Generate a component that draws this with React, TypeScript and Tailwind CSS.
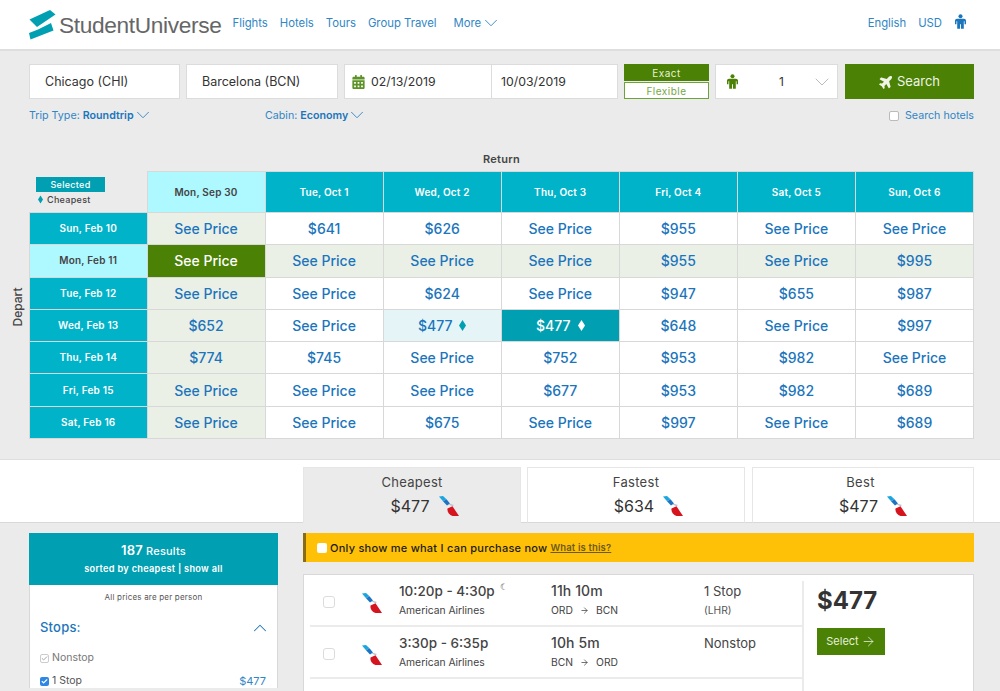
import { ChevronDown, ChevronUp, ArrowRight, Check } from 'lucide-react';
import { FaPlane, FaCalendarAlt } from 'react-icons/fa';

const returnDates = ['Mon, Sep 30', 'Tue, Oct 1', 'Wed, Oct 2', 'Thu, Oct 3', 'Fri, Oct 4', 'Sat, Oct 5', 'Sun, Oct 6'];

const S = 'See Price';
const rows = [
  { depart: 'Sun, Feb 10', prices: [S, '$641', '$626', S, '$955', S, S] },
  { depart: 'Mon, Feb 11', prices: [S, S, S, S, '$955', S, '$995'] },
  { depart: 'Tue, Feb 12', prices: [S, S, '$624', S, '$947', '$655', '$987'] },
  { depart: 'Wed, Feb 13', prices: ['$652', S, '$477', '$477', '$648', S, '$997'] },
  { depart: 'Thu, Feb 14', prices: ['$774', '$745', S, '$752', '$953', '$982', S] },
  { depart: 'Fri, Feb 15', prices: [S, S, S, '$677', '$953', '$982', '$689'] },
  { depart: 'Sat, Feb 16', prices: [S, S, '$675', S, '$997', S, '$689'] },
];

function Diamond({ className }: { className: string }) {
  return (
    <svg viewBox="0 0 7 11" className={className}>
      <polygon points="3.5,0 7,5.5 3.5,11 0,5.5" fill="currentColor" />
    </svg>
  );
}

function Person({ className }: { className: string }) {
  return (
    <svg viewBox="0 0 12 16" className={className}>
      <circle cx="6" cy="2.2" r="2.2" fill="currentColor" />
      <path d="M2.2 5h7.6c1.2 0 2.2 1 2.2 2.2V11h-1.600V7.600H9.600V16H6.500v-5h-1v5H2.400V7.600h-.8V11H0V7.200C0 6 1 5 2.200 5z" fill="currentColor" />
    </svg>
  );
}

function AALogo({ className }: { className: string }) {
  return (
    <svg viewBox="0 0 20 20" className={className}>
      <path d="M0 0.500L4 0l3.500 3.200-3.500 2.100z" fill="#1ba6e0" />
      <path d="M4 5.300l3.500-2.100 3.500 4.300-3 2z" fill="#1f73c4" />
      <path d="M9.500 8.500l1.500-.8 4 1.200-1.500 1.400z" fill="#bcc4ca" />
      <path d="M8.500 12.500l5-2.200L20 20h-6.500C10.200 19 8 16 8.500 12.500z" fill="#d5141f" />
    </svg>
  );
}

function Logo() {
  return (
    <svg viewBox="0 0 27 30" className="w-[27px] h-[30px] shrink-0">
      <path d="M0.500 9.500L21 0l5.500 4.500L8 17z" fill="#00a0b2" />
      <path d="M22 13l2.500 7.500L1.500 29.500 0 23l9-3.500z" fill="#00a0b2" />
    </svg>
  );
}

function Field({ value }: { value: string }) {
  return (
    <div className="h-[35px] bg-white border border-[#dcdcdc] flex items-center pl-[15px] pt-[2px] text-[12.5px] text-[#333]">
      {value}
    </div>
  );
}

function PriceCell({ value, rowIndex, colIndex }: { value: string; rowIndex: number; colIndex: number }) {
  const selected = rowIndex === 1 && colIndex === 0;
  const teal = rowIndex === 3 && colIndex === 3;
  const pale = rowIndex === 3 && colIndex === 2;
  const tinted = rowIndex === 1 || colIndex === 0;

  let cls = 'bg-white text-[#1b75bc]';
  if (tinted) cls = 'bg-[#ebf0e7] text-[#1b75bc]';
  if (pale) cls = 'bg-[#e5f5f7] text-[#1b75bc]';
  if (teal) cls = 'bg-[#009fb2] text-white';
  if (selected) cls = 'bg-[#4b8205] text-white';

  return (
    <div className={`flex items-center justify-center gap-[7px] border-r border-b border-[#d8d8d8] text-[14px] font-medium ${cls}`}>
      {value}
      {pale && <Diamond className="w-[7px] h-[11px] text-[#009fb2]" />}
      {teal && <Diamond className="w-[7px] h-[11px] text-white" />}
    </div>
  );
}

function FareTab({ label, price, active, width }: { label: string; price: string; active?: boolean; width: string }) {
  return (
    <div
      className={`${width} h-[56px] border border-[#e6e6e6] flex flex-col items-center pt-[5px] ${
        active ? 'bg-[#ebebeb] border-b-[#ebebeb]' : 'bg-white border-b-[#d8d8d8]'
      }`}
    >
      <div className="text-[13px] leading-[18px] text-[#444] tracking-[0.3px]">{label}</div>
      <div className="flex items-center gap-[9px] mt-[4px] pl-[25px]">
        <span className="text-[16px] leading-[22px] text-[#333]">{price}</span>
        <AALogo className="w-[20px] h-[20px]" />
      </div>
    </div>
  );
}

function FlightLeg({ time, night, route, duration, stops, via }: { time: string; night?: boolean; route: [string, string]; duration: string; stops: string; via?: string }) {
  return (
    <div className="h-[52px] flex border-b-2 border-[#ebebeb] text-[#444]">
      <div className="w-[38px] flex items-center pl-[13px] pt-[4px]">
        <span className="w-[12px] h-[12px] rounded-[3px] border border-[#dcdcdc] bg-white block" />
      </div>
      <div className="w-[51px] flex items-center pl-[14px] pt-[5px]">
        <AALogo className="w-[20px] h-[20px]" />
      </div>
      <div className="w-[152px] pt-[7px]">
        <div className="text-[13.5px] leading-[18px] font-medium flex items-start">
          {time}
          {night && <span className="ml-[5px] text-[9px] leading-[10px] text-[#555]">☾</span>}
        </div>
        <div className="text-[10.3px] leading-[14px] mt-[3px]">American Airlines</div>
      </div>
      <div className="w-[153px] pt-[7px]">
        <div className="text-[14px] leading-[18px] font-medium tracking-[0.1px]">{duration}</div>
        <div className="text-[10.3px] leading-[14px] mt-[3px] flex items-center gap-[7px]">
          {route[0]}
          <ArrowRight className="w-[9px] h-[9px]" strokeWidth={2} />
          {route[1]}
        </div>
      </div>
      <div className="flex-1 pt-[7px]">
        <div className="text-[13px] leading-[18px]">{stops}</div>
        {via && <div className="text-[10.3px] leading-[14px] mt-[3px] text-[#555]">{via}</div>}
      </div>
    </div>
  );
}

export default function App() {
  return (
    <div className="h-[691px] overflow-hidden bg-[#ebebeb] font-['Inter',sans-serif] text-[#333]">
      {/* header */}
      <header className="h-[51px] bg-white border-b-2 border-[#dedede] flex items-center pl-[29px] pr-[34px] pb-[2px]">
        <div className="flex items-center mr-[11px] mt-[2px]">
          <Logo />
          <span className="ml-[3px] text-[22.7px] leading-[30px] tracking-[-0.35px] text-[#666] font-['Liberation_Sans',sans-serif]">StudentUniverse</span>
        </div>
        <nav className="flex items-center gap-[12px] text-[11.3px] text-[#2f86c5]">
          <span>Flights</span>
          <span>Hotels</span>
          <span>Tours</span>
          <span>Group Travel</span>
          <span className="ml-[5px] flex items-center gap-[4px]">
            More <ChevronDown className="w-[22px] h-[22px] -mx-[5px] -mt-[2px]" strokeWidth={1} />
          </span>
        </nav>
        <div className="ml-auto flex items-center gap-[12px] text-[11.3px] text-[#2f86c5]">
          <span>English</span>
          <span>USD</span>
          <Person className="w-[11px] h-[15px] ml-[1px] mb-[4px] text-[#1b75bc]" />
        </div>
      </header>

      {/* search */}
      <section className="h-[408px] pl-[29px] pr-[26px] pt-[13px] relative">
        <div className="flex">
          <div className="w-[151px]"><Field value="Chicago (CHI)" /></div>
          <div className="w-[152px] ml-[6px]"><Field value="Barcelona (BCN)" /></div>
          <div className="w-[274px] ml-[6px] h-[35px] bg-white border border-[#dcdcdc] flex items-center text-[12.3px]">
            <div className="w-[147px] flex items-center pl-[7px] gap-[6px] h-full border-r border-[#dcdcdc]">
              <FaCalendarAlt className="w-[13px] h-[14px] text-[#5c9227]" />
              <span className="pt-[1px]">02/13/2019</span>
            </div>
            <div className="pl-[9px] pt-[1px]">10/03/2019</div>
          </div>
          <div className="w-[85px] ml-[6px] h-[35px] flex flex-col text-[10px] tracking-[0.5px]">
            <div className="h-[17px] pt-[1px] bg-[#4b8205] text-[#e8f0dc] flex items-center justify-center">Exact</div>
            <div className="h-[17px] mt-[1px] pt-[1px] bg-white border border-[#6ea33c] text-[#76a744] flex items-center justify-center">Flexible</div>
          </div>
          <div className="w-[123px] ml-[6px] h-[35px] bg-white border border-[#dcdcdc] flex items-center pl-[11px] pr-[3px] text-[12px]">
            <Person className="w-[11px] h-[15px] text-[#4b8205]" />
            <span className="ml-[41px]">1</span>
            <ChevronDown className="ml-auto w-[24px] h-[24px] text-[#bbb]" strokeWidth={1} />
          </div>
          <div className="w-[129px] ml-[7px] h-[35px] bg-[#4b8205] text-[#eef4e6] text-[13px] flex items-center justify-center gap-[3px]">
            <FaPlane className="w-[15px] h-[15px] -rotate-45" />
            <span className="pt-[1px]">Search</span>
          </div>
        </div>

        <div className="flex items-center mt-[10px] h-[14px] text-[10.7px] text-[#2f86c5]">
          <div className="w-[236px] flex items-center">
            Trip Type:&nbsp;<span className="font-semibold text-[#1b75bc]">Roundtrip</span>
            <ChevronDown className="ml-[-2px] w-[22px] h-[22px] -mr-[5px] -mt-[2px]" strokeWidth={1} />
          </div>
          <div className="flex items-center">
            Cabin:&nbsp;<span className="font-semibold text-[#1b75bc]">Economy</span>
            <ChevronDown className="ml-[-2px] w-[22px] h-[22px] -mr-[5px] -mt-[2px]" strokeWidth={1} />
          </div>
          <div className="ml-auto flex items-center gap-[6px]">
            <span className="w-[10px] h-[10px] rounded-[2px] border border-[#bbb] bg-white block" />
            Search hotels
          </div>
        </div>

        <div className="mt-[29px] h-[14px] flex items-center justify-center text-[11px] font-semibold text-[#444] tracking-[0.3px]">Return</div>

        <div className="mt-[5px] w-[945px] relative">
          <div className="absolute left-[-18px] top-[42px] h-[188px] flex items-center justify-center w-[12px]">
            <span className="-rotate-90 text-[12px] font-medium text-[#444]">Depart</span>
          </div>
          <div className="grid grid-cols-[118.5px_repeat(7,minmax(0,1fr))] grid-rows-[42px_repeat(7,32.3px)]">
            <div className="pl-[7px] pt-[6px] border-r border-b border-[#d8d8d8]">
              <div className="w-[69px] h-[15px] bg-[#009fb2] text-white text-[9px] font-medium tracking-[0.3px] flex items-center justify-center">Selected</div>
              <div className="flex items-center mt-[1px] h-[13px] text-[9px] font-medium text-[#444] tracking-[0.3px]">
                <Diamond className="ml-[2px] w-[5px] h-[9px] text-[#009fb2] mr-[4px]" />
                Cheapest
              </div>
            </div>
            {returnDates.map((d, i) => (
              <div
                key={d}
                className={`flex items-center justify-center border-r border-b border-t border-[#d8d8d8] text-[10px] font-semibold tracking-[0.2px] ${
                  i === 0 ? 'bg-[#aef8ff] text-[#444]' : 'bg-[#00b3c9] text-white'
                }`}
              >
                {d}
              </div>
            ))}
            {rows.map((row, rowIndex) => [
              <div
                key={row.depart}
                className={`flex items-center justify-center border-r border-b border-l border-[#d8d8d8] text-[10px] font-semibold tracking-[0.2px] ${
                  rowIndex === 1 ? 'bg-[#aef8ff] text-[#444]' : 'bg-[#00b3c9] text-white'
                }`}
              >
                {row.depart}
              </div>,
              ...row.prices.map((p, colIndex) => (
                <PriceCell key={`${rowIndex}-${colIndex}`} value={p} rowIndex={rowIndex} colIndex={colIndex} />
              )),
            ])}
          </div>
        </div>
      </section>

      {/* fare tabs */}
      <section className="h-[64px] bg-white border-t border-[#dedede] border-b border-b-[#d8d8d8] pl-[303px] pr-[26px] pt-[7px] flex">
        <FareTab label="Cheapest" price="$477" active width="w-[218px]" />
        <div className="w-[6px]" />
        <FareTab label="Fastest" price="$634" width="w-[218px]" />
        <div className="w-[7px]" />
        <FareTab label="Best" price="$477" width="w-[222px] pr-[5px]" />
      </section>

      {/* results */}
      <section className="pl-[29px] pr-[26px] pt-[10px] flex gap-[25px] items-start">
        <aside className="w-[249px] bg-white border-x border-[#d8d8d8]">
          <div className="h-[52px] -mx-px bg-[#009fb2] text-white flex flex-col items-center pt-[9px]">
            <div className="text-[11px] leading-[16px] font-medium tracking-[0.2px]"><span className="text-[13px] font-semibold">187</span> Results</div>
            <div className="text-[9.2px] leading-[12px] mt-[4px] font-semibold tracking-[0.3px]">sorted by cheapest | show all</div>
          </div>
          <div className="text-center text-[8px] leading-[12px] mt-[6px] text-[#555] tracking-[0.2px]">All prices are per person</div>
          <div className="flex items-center justify-between pl-[10px] pr-[6px] mt-[17px] h-[16px]">
            <span className="text-[13px] font-medium text-[#1b75bc] tracking-[0.2px]">Stops:</span>
            <ChevronUp className="w-[22px] h-[22px] text-[#1b75bc]" strokeWidth={1.1} />
          </div>
          <div className="flex items-center pl-[10px] mt-[15px] h-[14px] text-[10.500px] text-[#777] gap-[3px]">
            <span className="w-[9px] h-[9px] border border-[#ccc] rounded-[2px] flex items-center justify-center">
              <Check className="w-[7px] h-[7px] text-[#999]" strokeWidth={3} />
            </span>
            Nonstop
          </div>
          <div className="flex items-center pl-[10px] pr-[11px] mt-[9px] h-[14px] text-[10.500px] text-[#555] gap-[3px]">
            <span className="w-[9px] h-[9px] bg-[#2f86e5] rounded-[2px] flex items-center justify-center">
              <Check className="w-[7px] h-[7px] text-white" strokeWidth={4} />
            </span>
            1 Stop
            <span className="ml-auto text-[11px] text-[#2f86c5]">$477</span>
          </div>
        </aside>

        <div className="w-[671px]">
          <div className="h-[29px] bg-[#ffc107] border-l-[3px] border-l-[#8a6d10] flex items-center pl-[11px] pt-[1px] text-[11px] font-medium text-[#1a1a1a] tracking-[0.25px]">
            <span className="w-[10px] h-[10px] rounded-[2px] bg-white block mr-[3px]" />
            Only show me what I can purchase now
            <span className="ml-[3px] text-[9.500px] font-semibold text-[#6d5a1c] underline tracking-[0.15px]">What is this?</span>
          </div>
          <div className="mt-[12px] h-[140px] bg-white border border-[#d8d8d8] flex">
            <div className="w-[498px] pl-[6px]">
              <FlightLeg time="10:20p - 4:30p" night route={['ORD', 'BCN']} duration="11h 10m" stops="1 Stop" via="(LHR)" />
              <FlightLeg time="3:30p - 6:35p" route={['BCN', 'ORD']} duration="10h 5m" stops="Nonstop" />
            </div>
            <div className="flex-1 mt-[6px] border-l-2 border-[#ebebeb] pl-[13px] pt-[5px]">
              <div className="text-[24px] leading-[30px] font-bold text-[#333]">$477</div>
              <div className="mt-[12px] w-[68px] h-[27px] bg-[#4b8205] text-[#e8f0dc] text-[11px] flex items-center justify-center gap-[2px]">
                Select
                <ArrowRight className="w-[15px] h-[15px]" strokeWidth={1.25} />
              </div>
            </div>
          </div>
        </div>
      </section>
    </div>
  );
}
